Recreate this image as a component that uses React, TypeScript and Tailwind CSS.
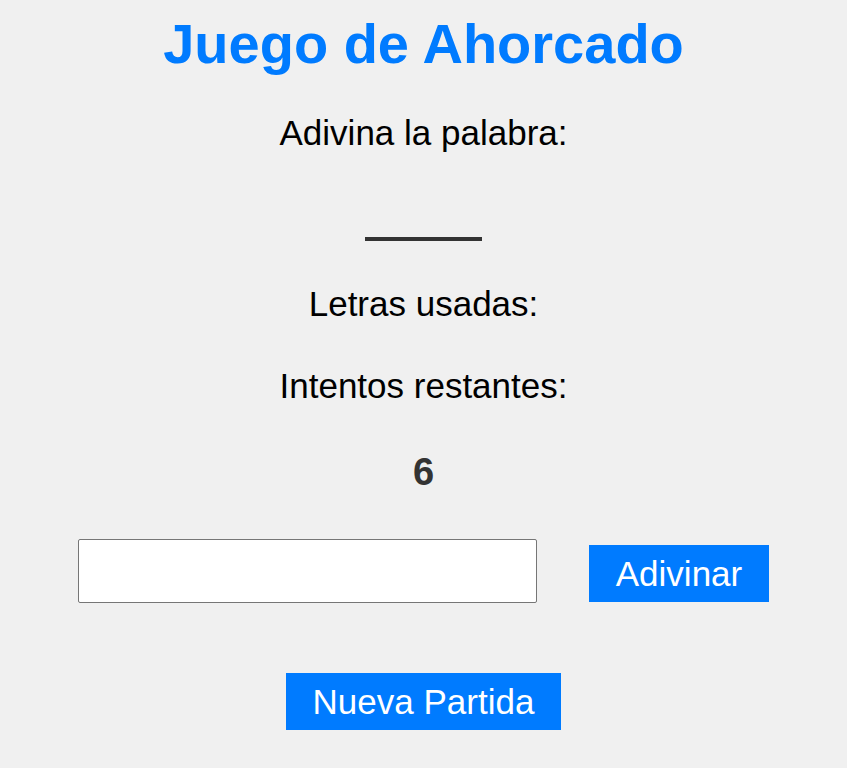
import React from "react";

export default function App() {
  return (
    <div
      className="min-h-[768px] w-full bg-[#f0f0f0] flex flex-col items-center text-black"
      style={{ fontFamily: '"Liberation Sans", Arial, sans-serif' }}
    >
      <h1 className="mt-[12px] text-[56px] leading-[64px] font-bold text-[#007bff]">
        Juego de Ahorcado
      </h1>
      <p className="mt-[37px] text-[35px] leading-[40px]">Adivina la palabra:</p>
      <div className="mt-[84px] h-[4px] w-[117px] bg-[#333333]" />
      <p className="mt-[43px] text-[35px] leading-[40px]">Letras usadas:</p>
      <p className="mt-[42px] text-[35px] leading-[40px]">Intentos restantes:</p>
      <p className="mt-[44px] text-[38px] leading-[44px] font-bold text-[#333333]">6</p>
      <div className="mt-[45px] flex items-start gap-[52px]">
        <input
          type="text"
          className="h-[64px] w-[459px] rounded-[2px] border border-[#767676] bg-white px-2 text-[34px] outline-none"
        />
        <button className="mt-[6px] h-[57px] px-[27px] bg-[#007bff] text-white text-[35px] leading-[40px]">
          Adivinar
        </button>
      </div>
      <button className="mt-[70px] h-[57px] px-[27px] bg-[#007bff] text-white text-[35px] leading-[40px]">
        Nueva Partida
      </button>
    </div>
  );
}
